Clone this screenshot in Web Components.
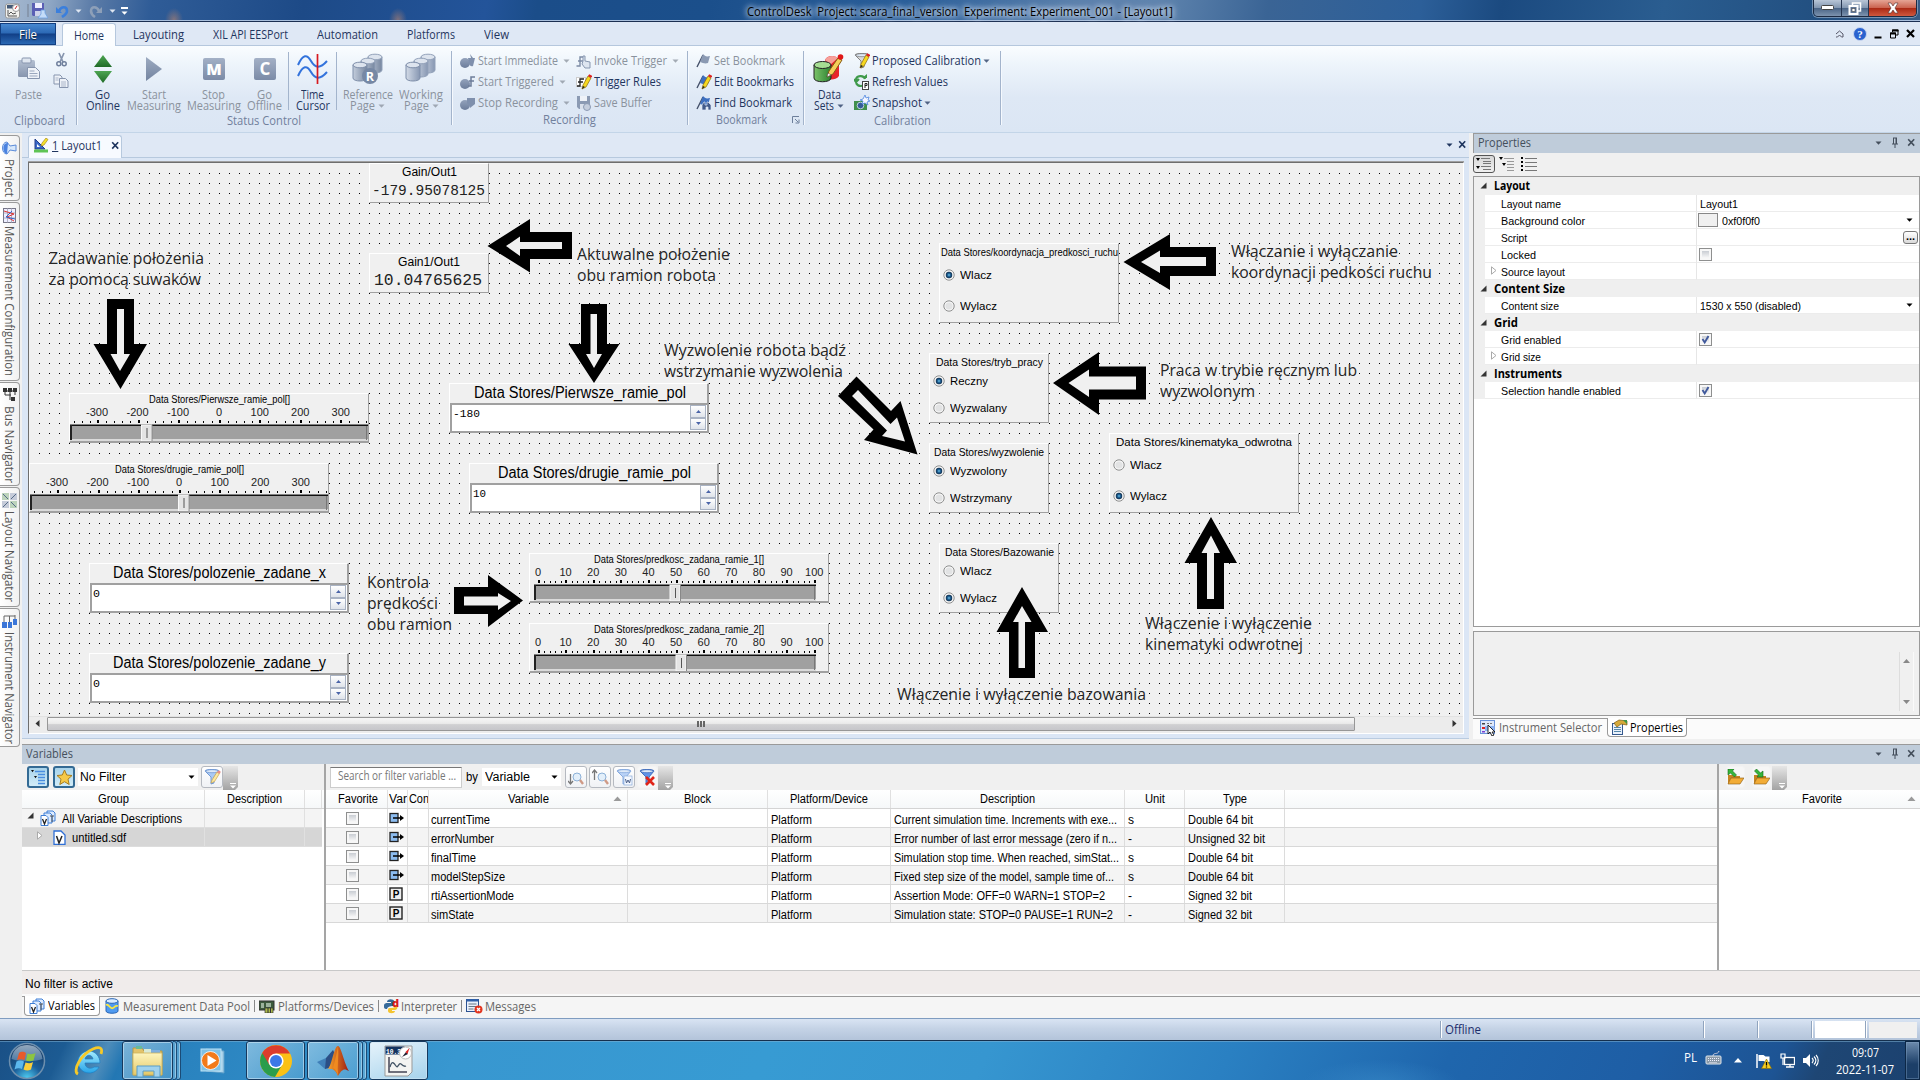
<!DOCTYPE html>
<html lang="pl">
<head>
<meta charset="utf-8">
<title>ControlDesk</title>
<style>
html,body{margin:0;padding:0;width:1920px;height:1080px;overflow:hidden;background:#f0f0f0}
</style>
</head>
<body>
<cd-app></cd-app>
<script>
const UI = "'Open Sans','Noto Sans',sans-serif", AR = "'Liberation Sans',Arial,sans-serif", MONO = "'Liberation Mono','Courier New',monospace";
const RESET = '*{box-sizing:border-box}:host([hidden]){display:none}svg{display:block}';
function def(name, css, html, after) {
  customElements.define(name, class extends HTMLElement {
    connectedCallback() {
      if (this.shadowRoot) return;
      const r = this.attachShadow({mode: 'open'});
      r.innerHTML = `<style>${RESET}${css}</style>` + (typeof html === 'function' ? html(this) : html);
      if (after) after(this, r);
    }
  });
}
const A = (e, n, d = '') => e.getAttribute(n) ?? d;

/* text squeezed or stretched to a given advance width */
def('fit-text', `:host{display:inline-block;white-space:pre;flex:none}
span{display:inline-block;transform-origin:0 50%}
:host([v]) span{writing-mode:vertical-rl;transform-origin:50% 0}`,
'<span><slot></slot></span>', (h, r) => {
  const s = r.querySelector('span'), w = +A(h, 'w', 0);
  if (!w) return;
  const b = s.getBoundingClientRect();
  if (h.hasAttribute('v')) { h.style.height = w + 'px'; s.style.transform = `scaleY(${w / b.height})`; }
  else { h.style.width = w + 'px'; s.style.transform = `scaleX(${w / b.width})`; }
});
const T = (t, w, st = '') => `<fit-text w="${w}" style="${st}">${t}</fit-text>`;

/* ---------- icons ---------- */
const G = (id, a, b, v = 1) => `<linearGradient id="${id}" x1="0" y1="0" x2="${v ? 0 : 1}" y2="${v ? 1 : 0}"><stop stop-color="${a}"/><stop offset="1" stop-color="${b}"/></linearGradient>`;
const cyl = (x, y, f, s) => `<path d="M${x} ${y}v13c0 4 14 4 14 0v-13z" fill="${f}" stroke="${s}"/><ellipse cx="${x + 7}" cy="${y}" rx="7" ry="2.8" fill="#dde4ee" stroke="${s}"/>`;
const rec = `<circle cx="5" cy="10" r="5" fill="url(#g)"/>`;
const flag = (c) => `<path d="M1 14L7 2" stroke="#44506a" stroke-width="1.4"/><path d="M7 1c2 2 3 3 7 2l-2 7c-3 1-5 0-8-1z" fill="${c}"/>`;
const pencil = `<path d="M6 15l1-4 5-9 3 2-5 9z" fill="#f6d820" stroke="#8a6a10" stroke-width=".7"/><path d="M12 2l1.200-1.800 3 1.700-1.200 2.100z" fill="#d22"/><path d="M6 15l1-3 2 1z" fill="#222"/>`;
const funnel = (a, s) => `<path d="M1 2c0-2 14-2 14 0l-5 6v6l-3 1V8z" fill="${a}" stroke="${s}" stroke-width=".9"/><ellipse cx="8" cy="2.200" rx="6.500" ry="1.500" fill="#dfeaf8" stroke="${s}" stroke-width=".7"/>`;
const I = {
 app:[16,16,`<rect x=".5" y="1" width="14" height="14" rx="2" fill="#f1f1ee" stroke="#999"/><rect x="2" y="2" width="7" height="3.500" fill="#445a77"/><path d="M3 7v6h9M4 11l2-2 2 2 3-1" stroke="#555" fill="none"/><circle cx="11" cy="5" r="3.500" fill="#fff" stroke="#999"/><path d="M10 6l2-3" stroke="#c22"/>`],
 save:[17,17,`<path d="M1 1h12v13H2l-1-1z" fill="#5a5fb4"/><rect x="4" y="1" width="7" height="5" fill="#eef"/><rect x="4" y="9" width="6" height="5" fill="#cdd2ea"/><path d="M10 8h4v3l3 5H7l3-4z" fill="#c4dcf8" stroke="#6ca0e0" stroke-width=".8"/>`],
 undo:[14,14,`<path d="M1 3v6h6z" fill="#3b7fdc"/><path d="M4 7C6 2 12 2 12 7c0 3-2 4-5 6" fill="none" stroke="#3b7fdc" stroke-width="2.600"/>`],
 redo:[14,14,`<path d="M13 3v6H7z" fill="#8d9fb8"/><path d="M10 7C8 2 2 2 2 7c0 3 1 4 4 6" fill="none" stroke="#8d9fb8" stroke-width="2.600"/>`],
 paste:[24,24,`<defs>${G('g','#b4c0d2','#8795ae')}</defs><rect x="1" y="3" width="17" height="17" rx="1.500" fill="url(#g)"/><rect x="5" y="1" width="9" height="5" rx="1" fill="#dfe6f0" stroke="#8795ae"/><path d="M10.500 10.500h8l4 4v7h-12z" fill="#eef2f8" stroke="#8795ae"/><path d="M12.500 14h5M12.500 16.500h8M12.500 19h8" stroke="#9aa7bd"/>`],
 cut:[11,15,`<path d="M3 1l4 9M8 1L4 10" stroke="#8795ae" stroke-width="1.700"/><circle cx="2.800" cy="11.800" r="2" fill="none" stroke="#6f7f9c" stroke-width="1.500"/><circle cx="8.200" cy="11.800" r="2" fill="none" stroke="#6f7f9c" stroke-width="1.500"/>`],
 copy:[16,14,`<path d="M1 1h6l2 2v7H1z" fill="#eef2f8" stroke="#8795ae"/><path d="M6.500 4.500h6l2.500 2.500v6.500h-8.500z" fill="#eef2f8" stroke="#8795ae"/><path d="M2.500 4h3M2.500 6h3M8 8h5M8 10h5M8 12h5" stroke="#9aa7bd" stroke-width=".8"/>`],
 online:[20,30,`<defs>${G('g','#4da552','#1f6b27')}</defs><path d="M10 1l9 12H1z" fill="url(#g)"/><path d="M10 29l9-12H1z" fill="url(#g)"/>`],
 play:[18,26,`<defs>${G('g','#9dabc1','#7384a0')}</defs><path d="M1 1l16 12L1 25z" fill="url(#g)"/>`],
 M:[24,24,`<defs>${G('g','#a3b0c6','#7b8ba7')}</defs><rect x="1" y="1" width="22" height="22" rx="2" fill="url(#g)"/><text x="12" y="18" text-anchor="middle" font-family="Open Sans" font-weight="800" font-size="16" fill="#fff">M</text>`],
 C:[24,24,`<defs>${G('g','#a3b0c6','#7b8ba7')}</defs><rect x="1" y="1" width="22" height="22" rx="2" fill="url(#g)"/><text x="12" y="18" text-anchor="middle" font-family="Open Sans" font-weight="700" font-size="17" fill="#fff">C</text>`],
 cursor:[32,32,`<path d="M1 12c5-11 9-11 13-4s9 8 16 0M1 23c5-11 9-11 13-4s9 8 16 0" fill="none" stroke="#3373dc" stroke-width="2"/><path d="M20.500 1v30" stroke="#d7191f" stroke-width="1.700"/>`],
 ref:[32,32,`<defs>${G('g','#c3cddc','#76869f',0)}</defs>${cyl(16,4,'url(#g)','#93a2ba')}${cyl(9,8,'url(#g)','#93a2ba')}${cyl(1,12,'url(#g)','#7f8faa')}<circle cx="18" cy="23" r="8" fill="#7688a5"/><text x="18" y="28" text-anchor="middle" font-family="Open Sans" font-weight="700" font-size="12.500" fill="#fff">R</text>`],
 work:[32,32,`<defs>${G('g','#d3dbe7','#8797b2',0)}</defs>${cyl(16,4,'url(#g)','#93a2ba')}${cyl(9,8,'url(#g)','#93a2ba')}${cyl(1,12,'url(#g)','#7f8faa')}`],
 rec1:[16,16,`<defs>${G('g','#93a2bb','#6c7d9b')}</defs>${rec}<path d="M8 5h3l-1-4 3 4h2l-2 8c-2 1-4-1-4-3z" fill="#7f90ad"/>`],
 rec2:[16,16,`<defs>${G('g','#93a2bb','#6c7d9b')}</defs>${rec}<path d="M8 12h3V3h4M9 7h5" stroke="#6d7d99" stroke-width="1.500" fill="none"/>`],
 rec3:[16,16,`<defs>${G('g','#93a2bb','#6c7d9b')}</defs>${rec}<path d="M7 3h8v6l-5 4c0-4-3-4-3-5z" fill="#7f90ad"/>`],
 inv:[16,16,`<path d="M.5 13H4V4h4M2 8h5" stroke="#7c8ba5" stroke-width="1.400" fill="none"/><path d="M7 8V3h2v5l5 1v6H9l-3-4z" fill="#dde5f0" stroke="#8797b0"/>`],
 trig:[16,16,`<rect x=".5" y="3.500" width="9" height="9" fill="#fff" stroke="#ccc"/><path d="M1 12h3V5h4M2 8h5" stroke="#222" stroke-width="1.300" fill="none"/>${pencil}`],
 buf:[16,16,`<path d="M1 1h13v13H3l-2-2z" fill="#8b9ab3"/><rect x="4" y="1" width="7" height="5" fill="#eef2f8"/><rect x="4" y="9" width="6" height="5" fill="#d9e0eb"/><circle cx="11" cy="12" r="3.500" fill="#c5cedd" stroke="#8b9ab3"/>`],
 bm1:[16,16,flag('#8b9ab3')], bm2:[16,16,flag('#3d6fc0')+pencil],
 bm3:[16,16,flag('#3d6fc0')+`<path d="M6 15v-5l2-3h1v3h2V7h1l3 3v5h-3v-3h-2v3z" fill="#415a8a" stroke="#dfe6f5" stroke-width=".7"/>`],
 data:[32,32,`<defs>${G('g','#7cc36a','#2c8331',0)}</defs><path d="M12 7c2-5 10-5 14-1v17c-3 4-8 4-11 3z" fill="#e8242a"/><path d="M12 7c2-5 10-5 13-2l-8 7z" fill="#f6a09a"/><path d="M1 12v13c0 5 17 5 17 0V12z" fill="url(#g)" stroke="#222"/><ellipse cx="9.500" cy="12" rx="8.500" ry="3.500" fill="#a6dd93" stroke="#222"/><path d="M14 24l2-6 9-13 4 2-9 14z" fill="#f4cf5a" stroke="#8a5a10"/><path d="M14 24l1-4 3 2z" fill="#fff" stroke="#333" stroke-width=".5"/><circle cx="27.500" cy="4" r="2.800" fill="#e01818"/>`],
 prop:[16,16,`${funnel('#d8d8d8','#777')}${pencil}`],
 refr:[16,16,`<path d="M2 6c0-5 8-5 9-1M0 5l2 3 3-3M11 9c-1 4-7 4-9 0" stroke="#3f9a4b" stroke-width="2.200" fill="none"/><path d="M8 4h5V0z" fill="#3f9a4b"/><rect x="8.500" y="7.500" width="6" height="8" fill="#fff" stroke="#444"/><path d="M11 14V9.500h2v2h-2" stroke="#222" fill="none"/>`],
 snap:[16,16,`<rect x="0" y="6" width="13" height="9" fill="#3f8f4c"/><circle cx="6.500" cy="10.500" r="3.300" fill="#335c99" stroke="#bcd"/><path d="M11 0l1 3 3-1-1 3 2 1-3 1 1 3-3-2-3 1 1-3-3-1 3-1z" fill="#f5f7ff" stroke="#4f86df" stroke-width=".8"/>`],
 dlg:[8,8,`<path d="M.5 7V.5H7M3 3l3 3M7 3.500V7H3.500" stroke="#6d7f9b" fill="none"/>`],
 layout:[15,15,`<path d="M1 1v10h10z" fill="#3a69c8" stroke="#223e8a"/><path d="M3 6v3h3z" fill="#fff"/><rect x="0" y="11.500" width="14" height="3" fill="#5fc455"/><path d="M7 8l1-3 4-5 2 1.500-4 5.500z" fill="#f7e22b" stroke="#997a10" stroke-width=".6"/>`],
 caret:[7,4,`<path d="M.5.5h6L3.500 3.800z" fill="currentColor"/>`],
 x:[9,9,`<path d="M1.200 1.200l6 6.400M7.200 1.200l-6 6.400" stroke="currentColor" stroke-width="1.600"/>`],
 pin:[8,11,`<path d="M2.500 1v6M5.500 1v6M2 1h4M1 7h6M4 7v4" stroke="#444f5c" fill="none"/><path d="M5 1v6" stroke="#444f5c"/>`],
 chev:[9,8,`<path d="M1 4l3.500-3L8 4M1 7h1.500l2-2 2 2H8V4" stroke="#556" fill="none"/>`],
 help:[14,14,`<circle cx="7" cy="7" r="6.500" fill="#2a62cf" stroke="#c8d6ee"/><text x="7" y="11" text-anchor="middle" font-family="Liberation Serif" font-weight="700" font-size="11" fill="#fff">?</text>`],
 mini:[8,10,`<path d="M.5 8.500h7" stroke="#000" stroke-width="2"/>`],
 rest:[10,10,`<path d="M3.500 3V1H9v5H7" stroke="#000" fill="none"/><path d="M3 1.500h6.500M1 4.500h6" stroke="#000" stroke-width="2"/><path d="M1.500 4v5h5V4z" stroke="#000" fill="none"/>`],
 proj:[15,14,`<path d="M14 4v6l-6-1-3 4c-6 0-6-12 0-12l3 4z" fill="#d8e8fb" stroke="#5a8ad8"/><path d="M6 2c-6-1-6 10-1 11z" fill="#4b83e0"/>`],
 meas:[13,15,`<rect x=".5" y=".5" width="12" height="14" fill="#eef" stroke="#778"/><path d="M.5 5h12M.5 10h12M4.500 0v15M8.500 0v15" stroke="#99a" stroke-width=".7"/><path d="M1 3l10 3-7 3 7 4" stroke="#d33" fill="none"/><path d="M12 11L3 9l6-6" stroke="#36c" fill="none"/>`],
 bus:[14,14,`<path d="M2 3h10M2 3v4h6M12 3v4M7 3v9" stroke="#333" fill="none"/><rect x="0" y="0" width="4" height="4" fill="#333"/><rect x="5" y="0" width="4" height="4" fill="#333"/><rect x="10" y="0" width="4" height="4" fill="#333"/><rect x="8" y="9" width="4" height="4" fill="#333"/>`],
 lay2:[15,15,`<rect x="0" y="0" width="7" height="7" fill="#bcd3bb"/><rect x="8" y="0" width="7" height="7" fill="#c5cbd9"/><rect x="0" y="8" width="7" height="7" fill="#c5cbd9"/><rect x="8" y="8" width="7" height="7" fill="#bcd3bb"/><path d="M1 1l5 5M14 1L9 6M1 14l5-5M14 14L9 9" stroke="#556b88"/>`],
 inst:[15,13,`<path d="M2 8V1h11M7.500 1v7M13 0v5" stroke="#666" fill="none"/><rect x="0" y="7" width="5" height="6" fill="#3b76d8"/><rect x="6" y="7" width="4" height="6" fill="#3b76d8"/><rect x="11" y="4" width="4" height="6" fill="#3b76d8"/>`],
 cat1:[16,14,`<path d="M0 1h4l-2 3zM0 9h4l-2 3z" fill="#000"/><path d="M5 1.500h9M7 4.500h8M7 6.500h8M5 9.500h10M7 12.500h8" stroke="#777"/>`],
 cat2:[16,14,`<path d="M0 0h4l-2 3zM3 6h4l-2 3z" fill="#000"/><path d="M5 1.500h10M8 4.500h7M8 7.500h7M8 10.500h7M8 13.500h7" stroke="#999"/>`],
 cat3:[16,15,`<path d="M0 0h2v2H0zM0 4h2v2H0zM0 8h2v2H0zM0 12h2v2H0z" fill="#000"/><path d="M4 1.500h12M4 5.500h12M4 9.500h12M4 13.500h12" stroke="#777"/>`],
 tri:[7,7,`<path d="M6.500 .5v6H.5z" fill="#333"/>`],
 trio:[6,9,`<path d="M.5.800L5 4.500.5 8.200z" fill="#fff" stroke="#aaa"/>`],
 treeb:[16,16,`<path d="M1 1h3l-1.500 2.200zM4 7h3L5.500 9.200z" fill="#111"/><path d="M5 2.500h10M8 5.500h7M8 8.500h7M8 11.500h7M8 14.500h7" stroke="#4a8ee0" stroke-width="1.400"/>`],
 star:[17,17,`<path d="M8.500 1l2.200 5 5.300.5-4 3.700 1.200 5.300-4.700-2.800-4.700 2.800L5 10.200 1 6.500 6.300 6z" fill="#f5c948" stroke="#a87c1d"/>`],
 fpen:[17,17,funnel('#a9c9f5','#6a92cf')+`<path d="M7 14l1-3 5-8 2.500 1.500-5 8z" fill="#fbe8a0" stroke="#c9a24e" stroke-width=".7"/><circle cx="15" cy="3" r="1.600" fill="#e98d88"/>`],
 fw:[17,17,funnel('#b9d2f7','#7ea3da')+`<rect x="8" y="7" width="8" height="9" fill="#f4f8ff" stroke="#8bacd9" stroke-width=".7"/><path d="M9.500 10l1 4 1.500-3 1.500 3 1-4" stroke="#4c618a" fill="none"/>`],
 fx:[17,17,funnel('#5f93e8','#3a67b8')+`<path d="M7 8l8 8M15 8l-8 8" stroke="#e02418" stroke-width="2.600"/>`],
 sd:[17,17,`<path d="M2.500 5v10M0 12l2.500 3L5 12" stroke="#777" fill="none" stroke-width="1.300"/><circle cx="9" cy="8" r="4" fill="#e3effa" stroke="#8cb1d8"/><path d="M12 11l3 4" stroke="#cf9a86" stroke-width="2.400"/>`],
 su:[17,17,`<path d="M2.500 1v10M0 4l2.500-3L5 4" stroke="#777" fill="none" stroke-width="1.300"/><circle cx="10" cy="8" r="4" fill="#e3effa" stroke="#8cb1d8"/><path d="M13 11l3 4" stroke="#cf9a86" stroke-width="2.400"/>`],
 over:[15,24,`<defs>${G('g','#e6e6e6','#a3a3a3')}</defs><path d="M0 0h15v21l-3 3H0z" fill="url(#g)"/><path d="M7 17.500h6" stroke="#fff"/><path d="M7 19.500h6l-3 3z" fill="#fff"/>`],
 vars:[16,16,`<path d="M7 1h6l2 2v8H7z" fill="#dcebff" stroke="#3f7fd6"/><path d="M4 3h6l2 2v8H4z" fill="#dcebff" stroke="#3f7fd6"/><path d="M1 5.500h5l2 2v8H1z" fill="#fff" stroke="#3f7fd6"/><path d="M2.500 9l2 5 2-5" stroke="#222" stroke-width="1.300" fill="none"/><path d="M10 6h4M12 6v6" stroke="#555"/>`],
 vfile:[13,15,`<path d="M1 1h7l4 4v9.500H1z" fill="#fff" stroke="#2f6fd6" stroke-width="1.300"/><path d="M3.500 6l2.500 7L9 6" stroke="#222" stroke-width="1.500" fill="none"/>`],
 out:[16,12,`<rect x="1" y="1.500" width="8" height="9" fill="#8cbcf0" stroke="#222" stroke-width="1.300"/><path d="M4 6h8" stroke="#000" stroke-width="1.500"/><path d="M11 3l4 3-4 3z" fill="#000"/>`],
 P:[14,14,`<rect x="1" y="1" width="12" height="12" fill="#eee" stroke="#222" stroke-width="1.400"/><text x="7" y="11" text-anchor="middle" font-family="Liberation Sans" font-weight="700" font-size="10" fill="#000">P</text>`],
 up:[9,6,`<path d="M4.500.5l4 4.500h-8z" fill="#9a9a9a"/>`],
 pool:[14,16,`<path d="M1 3v10c0 3 12 3 12 0V3z" fill="#4f9af0" stroke="#2a66b5"/><ellipse cx="7" cy="3" rx="6" ry="2.300" fill="#d7eaff" stroke="#2a66b5"/><path d="M1 7c3-2 4 5 7 3 2-1 2-3 5-2" stroke="#f8e642" stroke-width="1.800" fill="none"/>`],
 plat:[16,14,`<rect x="0" y="2" width="15" height="9" fill="#3c5a3c" stroke="#333"/><path d="M2 4h3v5H2zM7 4h5v4H7z" fill="#9cb29c"/><path d="M6 14V9h8v5z" fill="#aab94a" stroke="#333" stroke-width=".7"/><path d="M9 9v5M11.500 9v5" stroke="#333"/>`],
 py:[16,16,`<path d="M1 8c0-3 2-3 4-3h3V4H4c0-4 7-3 7-1v4c0 2-6 0-7 4-3 0-3-1-3-3z" fill="#35699a"/><path d="M12 7c3 0 3 2 2 4-1 1-2 1-5 1v1h3c0 3-7 3-7 0 0-4 1-3 4-3 2 0 3-1 3-3z" fill="#f4c430"/><text x="12.500" y="8.500" text-anchor="middle" font-family="Open Sans" font-weight="800" font-size="11" fill="#d81c1c">d</text>`],
 msg:[17,16,`<rect x=".5" y="1.500" width="12" height="12" fill="#eaf1fb" stroke="#2c5292"/><rect x=".5" y="1" width="12" height="2.500" fill="#2f5fa8"/><path d="M2.500 6h8M2.500 8.500h8M2.500 11h5" stroke="#678"/><circle cx="12.500" cy="11.500" r="4" fill="#e2351f"/><path d="M11 10l3 3M14 10l-3 3" stroke="#fff" stroke-width="1.300"/>`],
 isel:[16,16,`<rect x=".5" y=".5" width="14" height="13" fill="#dfe9fb" stroke="#6a93da"/><rect x="5" y="6" width="9.500" height="5" fill="#8fb4f2"/><path d="M2 3h3v1.500H2z" fill="#444"/><path d="M2 7h3v2H2z" fill="#d22"/><path d="M2 11h3v1.500H2z" fill="#7a3fd0"/><path d="M7 3.500h6" stroke="#777" stroke-dasharray="2 1"/><path d="M8 5v9l2-2 2 4 2-1-2-3h3z" fill="#fff" stroke="#111" stroke-width=".9"/>`],
 propi:[17,16,`<rect x="1.500" y="4.500" width="10" height="11" fill="#eaf1fb" stroke="#35598e"/><path d="M3 8.500h7M3 10.500h7M3 12.500h7" stroke="#58a"/><path d="M3 4l5-3 8 1v4l-6-1-4 3z" fill="#d5a93a" stroke="#7c5b12" stroke-width=".7"/><path d="M12 1h4v4z" fill="#3d9447"/>`],
 fold1:[17,16,`<path d="M1 6h5l1 1h6v3H4L1 15z" fill="#c78420"/><path d="M4 9h13l-4 6H1z" fill="#f2ac36" stroke="#8b5a10" stroke-width=".6"/><path d="M1 0h6L5.500 2l4 4-2 2-4-4L1 6z" fill="#35b63a" stroke="#14661a" stroke-width=".6"/>`],
 fold2:[17,16,`<path d="M1 6h5l1 1h6v3H4L1 15z" fill="#c78420"/><path d="M4 9h13l-4 6H1z" fill="#f2ac36" stroke="#8b5a10" stroke-width=".6"/><path d="M10 8H4l1.500-2-4-4 2-2 4 4L10 2z" fill="#35b63a" stroke="#14661a" stroke-width=".6"/>`],
 orb:[38,38,`<defs><radialGradient id="r" cx=".5" cy="1" r=".9"><stop stop-color="#4fd0f4"/><stop offset=".45" stop-color="#1b5f9b"/><stop offset="1" stop-color="#173a63"/></radialGradient>${G('h','#e8f3fb','#6f96bb')}</defs><circle cx="19" cy="19" r="17.500" fill="url(#r)" stroke="#6d8fae" stroke-width="1.500"/><path d="M3.500 17C5 6 12 3 19 3s14 3 15.500 14C26 20 12 20 3.500 17z" fill="url(#h)" opacity=".6"/><path d="M11 11c3-2 5-1 7 0l-1.500 7c-3-1-5-1-7.500 0z" fill="#e65a2b"/><path d="M19.500 11.500c3 1 5 1 8-.5l-2 7.500c-3 1-5 1-7.500 0z" fill="#8cc541"/><path d="M8.500 19.500c3-1.500 5-1 7.500 0l-2 7.500c-2-1-5-1-7.500.5z" fill="#5cb8ee"/><path d="M17.500 20.500c3 1 5 1 7.500-.5l-2 7.500c-3 1.500-5 1-7.500 0z" fill="#fbce3b"/>`],
 ie:[32,32,`<defs>${G('g','#a5ecff','#27a4e8')}</defs><path fill-rule="evenodd" d="M26 22c-2 4-6 6-10 6-6 0-11-5-11-11S10 6 16 6s11 5 11 12H12c0 6 7 6 9 4zM12 14h8c-1-5-7-5-8 0z" fill="url(#g)" stroke="#1c7fc4" stroke-width=".7"/><path d="M5 29C-1 26 8 9 20 4c7-3 10-1 8 5" fill="none" stroke="#f6c928" stroke-width="2.800"/>`],
 expl:[34,34,`<defs>${G('g','#fdf5be','#e5c867')}</defs><path d="M2 4h9l2 3h18v24H2z" fill="#e2c36b" stroke="#b59a48"/><path d="M5 2h6v3H5z" fill="#6b9"/><path d="M13 5h7v4h-7z" fill="#d9ead6"/><path d="M20 6h9v4h-9z" fill="#7fb0df"/><path d="M2 9h29v22H2z" fill="url(#g)" stroke="#cdb25c" stroke-width=".8"/><path d="M6 33V22h23v11h-6v-6H12v6z" fill="#9fd2ee" stroke="#5b9dc6"/>`],
 wmp:[30,30,`<path d="M8 3l18 2v22l-18-2z" fill="#a5cfe8" stroke="#5d9fc9"/><rect x="3" y="3" width="20" height="22" fill="#7ec1e6" stroke="#bfe3f5"/><circle cx="12.500" cy="14.500" r="9" fill="#f27a1a" stroke="#fff" stroke-width=".8"/><path d="M9.500 9v11l9-5.500z" fill="#fff"/>`],
 chrome:[32,32,`<circle cx="16" cy="16" r="16" fill="#fbc116"/><path d="M2.200 8A16 16 0 0 0 15 32L22 20 16 16z" fill="#2a9d4c"/><path d="M2.200 8l7.300 12L16 8.500h14A16 16 0 0 0 2.200 8z" fill="#dc3c2c"/><circle cx="16" cy="16" r="7.600" fill="#fff"/><circle cx="16" cy="16" r="6" fill="#3b78e7"/>`],
 matlab:[34,32,`<defs>${G('g','#f7a128','#9c1c12',0)}</defs><path d="M1 17l9-4 5 5-6 6z" fill="#3f7fb8"/><path d="M10 13l7-8 3 6-7 12-4 1z" fill="#2b4f86"/><path d="M12 24c4-4 6-23 10-23 3 0 6 17 11 25-5-3-7-2-11 5-2-5-5-8-10-7z" fill="url(#g)"/><path d="M22 1c-1 6-3 15-5 22 2 1 4 4 5 8-1-10 1-20 0-30z" fill="#f08a20"/>`],
 cdesk:[32,32,`<path d="M2 1h27v26l-4 4H2z" fill="#f4f4f2" stroke="#999"/><rect x="2.500" y="1.500" width="19" height="8" fill="#14335f"/><text x="3" y="8.500" font-family="Liberation Mono" font-weight="700" font-size="8" textLength="15" lengthAdjust="spacingAndGlyphs" fill="#fff">10.3</text><path d="M6 12v15h18" stroke="#445" stroke-width="1.500" fill="none"/><path d="M7 22c2-7 4-4 6-1s3-4 5-2 3 3 5 2" stroke="#456" fill="none" stroke-width="1.300"/><circle cx="22.500" cy="8" r="6" fill="#fff" stroke="#bbb"/><path d="M19 12l4-5 2 2z" fill="#223"/><path d="M22.500 7l4-4-2 6z" fill="#d22"/>`],
 kbd:[17,15,`<path d="M8 6c0-4 5-1 6-5" stroke="#ccd" fill="none"/><rect x="1" y="6" width="15" height="8" rx="1" fill="#8b9aa8" stroke="#dfe6ec"/><path d="M3 8.500h11M3 10.500h11M4.500 12.500h8" stroke="#eef" stroke-dasharray="1 1"/>`],
 tup:[8,5,`<path d="M4 0l4 4.500H0z" fill="#fff"/>`],
 flagw:[16,16,`<path d="M1 1v14" stroke="#fff" stroke-width="1.500"/><path d="M2.500 2h5l2 1.500h4V9h-4l-2-1h-5z" fill="#fff"/><path d="M10.500 6l5 9.500h-10z" fill="#f9cf1f" stroke="#8a6c00" stroke-width=".6"/><path d="M10.500 9v3.500M10.500 13.500v1" stroke="#000" stroke-width="1.300"/>`],
 net:[15,15,`<rect x="4.500" y="4.500" width="10" height="7" fill="#1d4470" stroke="#fff" stroke-width="1.300"/><path d="M6 14h8M10 12v2" stroke="#fff" stroke-width="1.300"/><path d="M1 1h4v4H1zM3 5v7" stroke="#fff" fill="none" stroke-width="1.200"/>`],
 spk:[16,15,`<path d="M0 5h3l4-4v13l-4-4H0z" fill="#fff"/><path d="M9 5c1.500 1.500 1.500 3.500 0 5M11 3.500c2.500 2.500 2.500 5.500 0 8M13 2c3 3 3 8 0 11" stroke="#fff" fill="none" stroke-width="1.100"/>`]
};
def('cd-icon', ':host{display:inline-block;flex:none;line-height:0}', h => {
  const [w, ht, s] = I[A(h, 'n')]; return `<svg width="${w}" height="${ht}" viewBox="0 0 ${w} ${ht}">${s}</svg>`;
});
const IC = (n, st = '') => `<cd-icon n="${n}" style="${st}"></cd-icon>`;

/* ---------- title bar ---------- */
def('title-bar', `:host{display:flex;height:22px;border-bottom:1px solid #1c2f52;box-shadow:inset 0 -1px 0 #a9bfdc;
background:radial-gradient(ellipse 9px 12px at 174px 20px,#b9856f99,transparent),radial-gradient(ellipse 9px 12px at 398px 20px,#b9856f99,transparent),linear-gradient(100deg,#a9bbd1 0,#8ea6c4 50px,#5879a6 95px,#2f5c97 150px,#1d4a87 300px,#23549a 480px,#1b4d89 530px,#1b4f8b 700px,#2b5f9a 900px,#5b80ac 1060px,#5f84ae 1140px,#3a6495 1250px,#2c5f99 1400px,#1b4a80 1480px,#2a5d90 1640px,#224f80 1800px,#3d6088 1920px);font:12px ${UI};color:#000;align-items:center}
.q{display:flex;align-items:center;padding-left:5px;height:19px;width:747px;color:#dfe7f2}
.sep{width:2px;height:13px;background:#8797ad;margin:0 2px 0 6px}
.t{text-shadow:0 0 5px #dde8f5,0 0 7px #cfdcee,0 0 9px #c5d5ea;margin-top:2px}
.w{margin-left:auto;margin-right:3px;display:flex;height:17px;align-self:flex-start;border:1px solid #1d2b43;border-top:0;border-radius:0 0 5px 5px;overflow:hidden;box-shadow:0 0 0 1px #b9c8dc88}
.w div{display:flex;align-items:center;justify-content:center;background:linear-gradient(#b9c6d7 0,#8397b1 48%,#4a6486 52%,#7d93ae);border-right:1px solid #24344f}
.w .c{background:linear-gradient(#e5a595 0,#cb6450 48%,#ab2a15 52%,#d0583e);border:0}`,
`<div class="q">${IC('app')}<i class="sep"></i>${IC('save')}${IC('undo','margin-left:7px')}${IC('caret','margin-left:6px')}${IC('redo','margin-left:7px')}${IC('caret','margin-left:6px')}${IC('caret','margin-left:5px;border-top:2px solid #fff;padding-top:2px;color:#fff')}</div>
<div class="t">${T('ControlDesk  Project: scara_final_version  Experiment: Experiment_001 - [Layout1]',426)}</div>
<div class="w"><div style="width:28px"><svg width="13" height="6"><rect x=".5" y=".5" width="12" height="4" rx="1" fill="#fff" stroke="#444"/></svg></div>
<div style="width:27px"><svg width="14" height="13"><rect x="4.500" y="1" width="8" height="8" fill="none" stroke="#fff" stroke-width="1.500"/><rect x="1.500" y="4" width="8" height="8" fill="#60789a" stroke="#fff" stroke-width="2"/><rect x="4" y="6.500" width="3" height="3" fill="#fff" stroke="#444" stroke-width=".6"/></svg></div>
<div class="c" style="width:47px"><svg width="14" height="12"><path d="M2 1h3l2 3 2-3h3L9 6l3 5H9L7 8l-2 3H2l3-5z" fill="#fff" stroke="#533" stroke-width=".6"/></svg></div></div>`);

/* ---------- ribbon ---------- */
def('ribbon-tabs', `:host{display:flex;height:24px;background:#dfe8f5;border-bottom:1px solid #b5c7dd;font:12px ${UI};color:#1f355e;padding-top:1px}
.f{width:56px;height:22px;background:linear-gradient(#4788d0 0,#2c69b5 45%,#113f86 50%,#2a68b3);color:#fff;border:1px solid #123f82;display:flex;align-items:center;justify-content:center;text-shadow:0 1px 1px #123}
.h{width:54px;margin-left:6px;height:23px;background:#fbfdff;border:1px solid #b5c7dd;border-bottom:0;border-radius:3px 3px 0 0;display:flex;align-items:center;justify-content:center}
.t{display:flex;align-items:center;height:23px}
.r{margin-left:auto;display:flex;align-items:center;height:21px;padding-right:5px}`,
`<div class="f">${T('File',18)}</div><div class="h">${T('Home',30)}</div>
<div class="t">${T('Layouting',51,'margin-left:17px')}${T('XIL API EESPort',75,'margin-left:29px')}${T('Automation',61,'margin-left:29px')}${T('Platforms',48,'margin-left:29px')}${T('View',25,'margin-left:29px')}</div>
<div class="r">${IC('chev')}${IC('help','margin:0 7px 0 9px')}${IC('mini')}${IC('rest','margin:0 7px')}<svg width="9" height="9"><path d="M1 1l7 7M8 1L1 8" stroke="#000" stroke-width="2.200"/></svg></div>`);
def('rb-big', `:host{display:flex;flex-direction:column;align-items:center;color:#1f355e;height:68px;flex:none}
:host([off]){color:#8a929d}.i{height:36px;display:flex;align-items:center;justify-content:center}
.l{line-height:11px;height:11px;display:flex;align-items:center}.l cd-icon{margin-left:3px;opacity:.75}`,
h => `<div class="i">${IC(A(h,'n'))}</div><div class="l" style="margin-top:2px">${T(A(h,'a'),A(h,'aw'))}</div>${h.hasAttribute('b')?`<div class="l">${T(A(h,'b'),A(h,'bw'))}${h.hasAttribute('d')?IC('caret'):''}</div>`:''}`);
def('rb-row', `:host{display:flex;align-items:center;height:21px;color:#1f355e}:host([off]){color:#8a929d}.c{margin-left:2px;opacity:.75}:host([off]) .c{margin-left:5px}fit-text{margin-left:2px}`,
h => IC(A(h,'n'))+T(A(h,'t'),A(h,'w'))+(h.hasAttribute('d')?IC('caret').replace('cd-icon','cd-icon class="c"'):''));
def('ribbon-group', `:host{display:flex;flex-direction:column;height:74px;margin-top:5px;border-right:1px solid #a3b4cc;box-shadow:1px 0 0 #f5f9fe;flex:none}
.b{display:flex;height:63px;align-items:flex-start}.c{display:flex;justify-content:center;height:13px;align-items:center;color:#71809c}`,
h => `<div class="b"><slot></slot></div><div class="c" style="padding-left:${A(h,'cl',0)}px">${T(A(h,'c'),A(h,'cw'))}<slot name="x"></slot></div>`);
def('ribbon-bar', `:host{display:flex;height:87px;background:linear-gradient(#fafdff 0,#edf4fb 22%,#dee8f5 60%,#dbe6f4 100%);border-bottom:1px solid #c3d5e8;font:12px ${UI}}
rb-big{width:var(--w)}.s{width:1px;height:58px;background:#a3b4cc;margin-top:1px}.col{display:flex;flex-direction:column;margin-top:-1px}`,
`<ribbon-group c="Clipboard" cw="51" cl="3" style="width:77px"><rb-big off n="paste" a="Paste" aw="27" style="--w:57px"></rb-big><div style="display:flex;flex-direction:column;gap:7px;padding-top:1px;margin-left:-4px;align-items:center">${IC('cut')}${IC('copy')}</div></ribbon-group>
<ribbon-group c="Status Control" cw="74" cl="-2" style="width:375px"><rb-big n="online" a="Go" aw="15" b="Online" bw="34" style="--w:51px"></rb-big><rb-big off n="play" a="Start" aw="24" b="Measuring" bw="54" style="--w:52px"></rb-big><rb-big off n="M" a="Stop" aw="23" b="Measuring" bw="54" style="--w:67px"></rb-big><rb-big off n="C" a="Go" aw="15" b="Offline" bw="35" style="--w:35px"></rb-big><i class="s" style="margin-left:6px"></i><rb-big n="cursor" a="Time" aw="23" b="Cursor" bw="34" style="--w:47px"></rb-big><i class="s"></i><rb-big off n="ref" a="Reference" aw="50" b="Page" bw="25" d style="--w:61px"></rb-big><rb-big off n="work" a="Working" aw="44" b="Page" bw="25" d style="--w:46px"></rb-big></ribbon-group>
<ribbon-group c="Recording" cw="53" style="width:236px"><div class="col" style="margin-left:8px;width:117px"><rb-row off n="rec1" t="Start Immediate" w="80" d></rb-row><rb-row off n="rec2" t="Start Triggered" w="76" d></rb-row><rb-row off n="rec3" t="Stop Recording" w="80" d></rb-row></div><div class="col" style="margin-left:-1px"><rb-row off n="inv" t="Invoke Trigger" w="73" d></rb-row><rb-row n="trig" t="Trigger Rules" w="67"></rb-row><rb-row off n="buf" t="Save Buffer" w="58"></rb-row></div></ribbon-group>
<ribbon-group c="Bookmark" cw="51" cl="8" style="width:116px"><div class="col" style="margin-left:8px"><rb-row off n="bm1" t="Set Bookmark" w="71"></rb-row><rb-row n="bm2" t="Edit Bookmarks" w="80"></rb-row><rb-row n="bm3" t="Find Bookmark" w="78"></rb-row></div><cd-icon n="dlg" slot="x" style="margin-left:25px;margin-right:-16px"></cd-icon></ribbon-group>
<ribbon-group c="Calibration" cw="57" style="width:197px"><rb-big n="data" a="Data" aw="23" b="Sets" bw="20" d style="--w:50px"></rb-big><div class="col"><rb-row n="prop" t="Proposed Calibration" w="109" d></rb-row><rb-row n="refr" t="Refresh Values" w="76"></rb-row><rb-row n="snap" t="Snapshot" w="50" d></rb-row></div></ribbon-group>`);

/* ---------- side dock ---------- */
def('side-tab', `:host{display:flex;flex-direction:column;align-items:center;width:20px;border:1px solid #9a9a9a;border-left:0;border-radius:0 4px 4px 0;background:linear-gradient(90deg,#fff,#f1f1f1);margin-bottom:1px;font:13px ${UI};color:#555;padding-top:2px}
.i{height:20px;display:flex;align-items:center}fit-text{margin-left:1px;width:18px;margin-top:1px}`,
h => `<div class="i">${IC(A(h,'n'))}</div><fit-text v w="${A(h,'w')}"><slot></slot></fit-text>`);
def('side-dock', ':host{display:block;width:22px;background:#f0f0f0;padding-top:2px}',
`<side-tab n="proj" w="38" style="height:66px">Project</side-tab><side-tab n="meas" w="150" style="height:179px">Measurement Configuration</side-tab><side-tab n="bus" w="77" style="height:104px">Bus Navigator</side-tab><side-tab n="lay2" w="91" style="height:120px">Layout Navigator</side-tab><side-tab n="inst" w="112" style="height:139px">Instrument Navigator</side-tab>`);

/* ---------- instruments on the layout ---------- */
const BOX = ':host{position:absolute;background:#f0f0f0;border:1px solid #fff;border-right-color:#a0a0a0;border-bottom:2px solid #a0a0a0;display:flex;flex-direction:column;color:#000;';
def('in-display', BOX + `font:12px ${AR};align-items:center;border-bottom-width:1px}.a{height:16px;display:flex;align-items:center}.b{height:22px;display:flex;align-items:center;font-family:${MONO};color:#222}`,
h => `<div class="a">${T(A(h,'t'),A(h,'tw'))}</div><div class="b" style="font-size:${A(h,'fs')}px;margin-top:${A(h,'vy',0)}px">${T(A(h,'v'),A(h,'vw'),'margin-left:-2px')}</div>`);
def('in-numeric', BOX + `font:16px ${AR};border-right-width:2px}.a{height:19px;display:flex;align-items:center;justify-content:center;padding:0 0 1px 2px}
.b{flex:1;background:#fff;border:1px solid #a0a0a0;border-width:2px 0 0 2px;display:flex;justify-content:space-between;padding:0 0 0 1px;font:11.5px ${MONO}}.b fit-text{margin-top:2px}
.s{width:17px;height:25px;display:flex;flex-direction:column;padding-right:1px}.s i{flex:1;border:1px solid #a9b3c4;background:linear-gradient(#fff,#dfe3ea);display:flex;align-items:center;justify-content:center}`,
h => `<div class="a">${T(A(h,'t'),A(h,'tw'))}</div><div class="b">${T(A(h,'v'),A(h,'vw'))}<div class="s"><i><svg width="5" height="3"><path d="M0 3h5L2.500 0z" fill="#4a64a8"/></svg></i><i><svg width="5" height="3"><path d="M0 0h5L2.500 3z" fill="#4a64a8"/></svg></i></div></div>`);
def('in-slider', BOX + `font:10px ${AR}}.t{height:13px;display:flex;align-items:center;justify-content:center;padding-bottom:1px}svg{flex:none}`,
h => {
  const x0 = +A(h,'x0'), st = +A(h,'st'), lab = A(h,'labels').split(','), mi = +A(h,'minor',5), tl = +A(h,'tl'), tr = +A(h,'tr'), th = +A(h,'th');
  let s = '';
  lab.forEach((l, i) => { s += `<text x="${x0 + i * st - (l < 0 ? 1 : .5)}" y="10" text-anchor="middle" font-size="11" font-family="Liberation Sans" fill="#222">${l}</text><rect x="${Math.round(x0 + i * st) - 1}" y="14" width="2" height="3"/>`; });
  for (let k = -mi * 2; k < lab.length * mi + mi; k++) { const x = x0 + k * st / mi; if (x > tl + 1 && x < tr - 1 && (!A(h,'hard') || (k >= 0 && k <= (lab.length - 1) * mi))) s += `<rect x="${Math.round(x)}" y="15" width="1" height="2"/>`; }
  return `<div class="t">${T(A(h,'t'),A(h,'tw'))}</div><svg width="298" height="35"><g>${s}</g>
<rect x="${tl}" y="19" width="${tr - tl}" height="16" fill="#a0a0a0"/><rect x="${tl}" y="33" width="${tr - tl}" height="2" fill="#dadada"/><rect x="${tl}" y="18.500" width="${tr - tl}" height="1.500" fill="#111"/><rect x="${tl}" y="19" width="2" height="15" fill="#222"/><rect x="${tr - 2}" y="20" width="1" height="14" fill="#777"/>
<rect x="${th - 5}" y="19" width="10" height="16" fill="#e4e4e4" stroke="#f8f8f8"/><path d="M${th + 5.500} 19v16" stroke="#888"/><path d="M${th + .5} 22v10" stroke="#555"/></svg>`;
});
def('in-radio', BOX + `font:11.500px ${AR};border-bottom-width:1px}.t{height:15px;display:flex;align-items:center;justify-content:center;flex:none}
.r{display:flex;align-items:center;gap:6px;padding-left:3px;height:14px;flex:none}.r svg{margin-left:-.5px}.r fit-text{margin-left:-.5px}`,
h => {
  const rad = on => `<svg width="12" height="12"><defs><radialGradient id="k"><stop stop-color="#6fc4ea"/><stop offset=".5" stop-color="#1f5f92"/><stop offset="1" stop-color="#0d2c4b"/></radialGradient></defs><circle cx="6" cy="6" r="5.200" fill="#f6f6f6" stroke="#8e8f8f"/><circle cx="6" cy="6" r="3.600" fill="#e2e3e4"/>${on ? '<circle cx="6" cy="6" r="3.200" fill="url(#k)"/>' : ''}</svg>`;
  const g = +A(h,'y1'), d = +A(h,'dy');
  return `<div class="t" style="font-size:${A(h,'fs',10.5)}px">${T(A(h,'t'),A(h,'tw'))}</div><div class="r" style="margin-top:${g - 23}px">${rad(A(h,'on') == 1)}${T(A(h,'a'),A(h,'aw'))}</div><div class="r" style="margin-top:${d - 14}px">${rad(A(h,'on') == 2)}${T(A(h,'b'),A(h,'bw'))}</div>`;
});
def('cd-note', `:host{position:absolute;display:flex;flex-direction:column;font:16.500px/21px ${UI};color:#262626;align-items:flex-start}fit-text{height:21px}`, '<slot></slot>');
def('arrow-layer', ':host{position:absolute;left:0;top:0;pointer-events:none}', () => {
  const ar = (o, i) => `<path d="M${o}z" fill="#000"/><path d="M${i}z" fill="#f0f0f0"/>`;
  return `<svg width="1434" height="553" viewBox="29 163 1434 553">`
  + ar('107 299H134V344H147L120.500 389 93.500 344H107','117 309H124V354H130L120 371 110.500 354H117')
  + ar('572 232V259H530V272.500L487.500 246 530 219V232','562 242V249H520V256L506 246 520 236.500V242')
  + ar('581 304H607V344H619.500L594 383 568.500 344H581','590.500 314H597V354H602L594 368 586 354H590.500')
  + ar('454 587H488V575L523 600.500 488 627V614H454','464 596.500H498V593L511 601 498 610V605.500H464')
  + ar('838 396L856.500 376.500 891 411 900.500 401 917.500 454.500 864 440 873.500 429.500','852 396L858 390 890.500 424 897 417.500 905 441.500 882 436 887 430.500')
  + ar('1216 247V276H1170V290L1123.500 262 1170 234V247','1206 257V266H1160V273L1141 262 1160 250.500V257')
  + ar('1146 366.500V399.500H1099V415L1053 383 1099 352V366.500','1136 376.500V389.500H1089V397L1068.500 383 1089 369.500V376.500')
  + ar('1197 609V563H1184.500L1211 517 1237 563H1224V609','1207 599V553H1201.500L1211 535.500 1220 553H1214V599')
  + ar('1009 678V632H996.500L1022 587 1048 632H1035V678','1018.500 668V622H1013L1022 606 1031.500 622H1025V668') + '</svg>';
});
const at = (x, y, w, h) => `left:${x - 29}px;top:${y - 163}px;` + (w ? `width:${w}px;height:${h}px;` : '');
const note = (x, yc, ...l) => `<cd-note style="${at(x, yc - 11)}">${l.map(([t, w]) => T(t, w)).join('')}</cd-note>`;
const deg = '-300,-200,-100,0,100,200,300', pct = '0,10,20,30,40,50,60,70,80,90,100';
def('layout-canvas', `:host{display:block;position:relative;width:1434px;height:553px;background:#f0f0f0;overflow:hidden}.g{position:absolute;inset:0}`,
`<svg class="g" width="1434" height="553"><defs><pattern id="p" width="10" height="10" patternUnits="userSpaceOnUse"><rect width="1" height="1" fill="#000"/></pattern></defs><rect x="10" y="10" width="1424" height="543" fill="url(#p)"/></svg>
<in-display style="${at(369,163,120,40)}" t="Gain/Out1" tw="55" v="-179.95078125" vw="113" fs="14" vy="1"></in-display>
<in-display style="${at(369,253,120,40)}" t="Gain1/Out1" tw="62" v="10.04765625" vw="108" fs="16"></in-display>
<in-slider style="${at(69,393,300,50)}" t="Data Stores/Pierwsze_ramie_pol[]" tw="141" labels="${deg}" x0="28" st="40.550" tl="0" tr="298" th="76.500"></in-slider>
<in-slider style="${at(29,463,300,50)}" t="Data Stores/drugie_ramie_pol[]" tw="129" labels="${deg}" x0="28" st="40.550" tl="0" tr="298" th="153.500"></in-slider>
<in-slider style="${at(529,553,300,50)}" t="Data Stores/predkosc_zadana_ramie_1[]" tw="170" labels="${pct}" hard="1" x0="8.500" st="27.620" tl="4" tr="286" th="145"></in-slider>
<in-slider style="${at(529,623,300,50)}" t="Data Stores/predkosc_zadana_ramie_2[]" tw="170" labels="${pct}" hard="1" x0="8.500" st="27.620" tl="4" tr="286" th="151"></in-slider>
<in-numeric style="${at(449,383,260,50)}" t="Data Stores/Pierwsze_ramie_pol" tw="212" v="-180" vw="27"></in-numeric>
<in-numeric style="${at(469,463,250,50)}" t="Data Stores/drugie_ramie_pol" tw="193" v="10" vw="13"></in-numeric>
<in-numeric style="${at(89,563,260,50)}" t="Data Stores/polozenie_zadane_x" tw="213" v="0" vw="7"></in-numeric>
<in-numeric style="${at(89,653,260,50)}" t="Data Stores/polozenie_zadane_y" tw="213" v="0" vw="7"></in-numeric>
<in-radio style="${at(939,243,180,80)}" t="Data Stores/koordynacja_predkosci_ruchu" tw="177" y1="32" dy="31" on="1" a="Wlacz" aw="32" b="Wylacz" bw="37"></in-radio>
<in-radio style="${at(929,353,120,70)}" t="Data Stores/tryb_pracy" tw="107" y1="28" dy="27" on="1" a="Reczny" aw="38" b="Wyzwalany" bw="57"></in-radio>
<in-radio style="${at(929,443,120,70)}" t="Data Stores/wyzwolenie" tw="110" y1="28" dy="27" on="1" a="Wyzwolony" aw="57" b="Wstrzymany" bw="62"></in-radio>
<in-radio style="${at(1109,433,190,80)}" t="Data Stores/kinematyka_odwrotna" tw="176" fs="11.500" y1="32" dy="31" on="2" a="Wlacz" aw="32" b="Wylacz" bw="37"></in-radio>
<in-radio style="${at(939,543,120,70)}" t="Data Stores/Bazowanie" tw="109" y1="28" dy="27" on="2" a="Wlacz" aw="32" b="Wylacz" bw="37"></in-radio>
${note(49,258,['Zadawanie położenia',155],['za pomocą suwaków',152])}
${note(577,254,['Aktuwalne położenie',153],['obu ramion robota',139])}
${note(664,350,['Wyzwolenie robota bądź',182],['wstrzymanie wyzwolenia',179])}
${note(367,582,['Kontrola',62],['prędkości',71],['obu ramion',85])}
${note(1231,251,['Włączanie i wyłączanie',167],['koordynacji pedkości ruchu',201])}
${note(1160,370,['Praca w trybie ręcznym lub',197],['wyzwolonym',95])}
${note(1145,623,['Włączenie i wyłączenie',167],['kinematyki odwrotnej',158])}
${note(897,694,['Włączenie i wyłączenie bazowania',249])}
<arrow-layer></arrow-layer>`);
def('layout-area', `:host{display:flex;flex-direction:column;width:1447px;height:606px;background:#dbe6f5;font:12px ${UI};color:#1f355e;border-bottom:1px solid #b9cbe0}
.tabs{height:25px;display:flex;background:#dfe8f5;border-bottom:1px solid #b7c9de;padding:2px 2px 0 6px}
.t{width:94px;height:23px;background:#f7faff;border:1px solid #b7c9de;border-bottom:0;border-radius:3px 3px 0 0;display:flex;align-items:center;padding:0 0 3px 5px}
.r{margin-left:auto;display:flex;align-items:center;gap:5px;padding-bottom:3px}
.f{margin:4px 6px 0;width:1436px;height:572px;border:1px solid #6e6e6e;border-width:1px 0 0 1px;border-right:1px solid #fff;border-bottom:1px solid #fff;background:#f0f0f0;box-shadow:0 -1px 0 #a0a0a0}
.s{height:17px;display:flex;align-items:center;padding:0 6px 2px;background:#ececec;border-top:1px solid #e2e2e2}
.th{width:1308px;height:14px;margin-left:7px;border:1px solid #979797;border-radius:1px;background:linear-gradient(#f6f6f6 0,#ebebeb 45%,#d0d0d2 55%,#c6c6ca);display:flex;align-items:center;justify-content:center;gap:1px}.th i{width:2px;height:6px;background:#666}`,
`<div class="tabs"><div class="t">${IC('layout')}${T('<u>1</u> Layout1',50,'margin-left:3px')}${IC('x','margin-left:9px')}</div><div class="r">${IC('caret')}${IC('x')}</div></div>
<div class="f"><layout-canvas></layout-canvas><div class="s"><svg width="5" height="8"><path d="M4.500 0v7L.5 3.500z" fill="#333"/></svg><div class="th"><i></i><i></i><i></i></div><svg width="5" height="8" style="margin-left:auto"><path d="M.5 0v7l4-3.500z" fill="#333"/></svg></div></div>`);

/* ---------- dock panels ---------- */
def('panel-header', `:host{display:flex;height:20px;align-items:center;background:#bfccda;border-top:1px solid #9a9a9a;padding:0 4px 2px 4px;font:12px ${UI};color:#444f5c;flex:none}.r{margin-left:auto;display:flex;align-items:center;gap:8px}`,
h => `${T(A(h,'t'),A(h,'w'))}<div class="r">${IC('caret','margin-right:1px')}${IC('pin')}${IC('x')}</div>`);
def('check-box', `:host{display:inline-block;flex:none;line-height:0}`, h => `<svg width="13" height="13"><defs>${G('c','#c9cdd3','#f8f8f8')}</defs><rect x=".5" y=".5" width="12" height="12" fill="#f7f7f7" stroke="#8e8f8f"/><rect x="3" y="3" width="7" height="7" fill="url(#c)"/>${h.hasAttribute('on')?'<path d="M3.500 6l2.200 3.500L9.500 3" stroke="#40599c" stroke-width="1.900" fill="none"/>':''}</svg>`);
const PG = [['c','Layout',36],['r','Layout name',60,T('Layout1',38,'margin-left:3px')],['r','Background color',84,'<i class="sw"></i>'+T('0xf0f0f0',38)+IC('caret','margin-left:auto;margin-right:6px;color:#000')],['r','Script',26,'<b class="dots">...</b>'],['r','Locked',35,'<check-box style="margin-left:2px"></check-box>'],['x','Source layout',64,''],['c','Content Size',71],['r','Content size',58,T('1530 x 550 (disabled)',101,'margin-left:3px')+IC('caret','margin-left:auto;margin-right:6px;color:#000')],['c','Grid',24],['r','Grid enabled',60,'<check-box on style="margin-left:2px"></check-box>'],['x','Grid size',40,''],['c','Instruments',68],['r','Selection handle enabled',120,'<check-box on style="margin-left:2px"></check-box>']];
def('property-grid', `:host{display:block;height:451px;background:#fff;border:1px solid #9a9a9a;font:11px ${AR};color:#000;box-sizing:border-box}
.c{height:17px;background:#efefef;display:flex;align-items:center;font:bold 12px ${UI};padding-left:6px}.c fit-text{margin-left:7px}.c:first-of-type{height:18px;padding-bottom:1px}
.r{height:17px;display:flex;padding-left:11px;background:#efefef}
.k{width:212px;display:flex;align-items:center;background:#fff;border-right:1px solid #e6e6e6;border-bottom:1px solid #ececec;padding:1px 0 0 16px}.k cd-icon{margin:-3px 4px 0 -10px}
.v{flex:1;display:flex;align-items:center;background:#fff;border-bottom:1px solid #ececec}.v fit-text{margin-top:1px}
.sw{width:20px;height:14px;border:1px solid #888;background:#f0f0f0;margin:0 4px 0 1px}.dots{margin-left:auto;width:15px;height:13px;margin-right:1px;border:1px solid #777;border-radius:3px;background:linear-gradient(#fff,#d9d9d9);line-height:8px;text-align:center}`,
PG.map(([k, t, w, v]) => k === 'c' ? `<div class="c">${IC('tri')}${T(t, w)}</div>` : `<div class="r"><div class="k">${k === 'x' ? IC('trio') : ''}${T(t, w)}</div><div class="v">${v}</div></div>`).join(''));
def('properties-panel', `:host{display:flex;flex-direction:column;width:447px;height:606px;background:#fbfbfb;font:12px ${UI}}
panel-header{border-left:1px solid #9a9a9a}
.tb{height:23px;background:#f0f0f0;display:flex;align-items:center;padding:0 0 1px 0;gap:4px}.p{width:22px;height:18px;border:1px solid #555;border-radius:3px;background:linear-gradient(#d8d8d8,#f0f0f0);display:flex;align-items:center;justify-content:center}
.d{height:85px;border:1px solid #9a9a9a;background:#f0f0f0;margin-top:4px;display:flex;justify-content:flex-end;padding:20px 5px 4px}
.sb{width:15px;border-left:1px solid #ddd;border-right:1px solid #fafafa;display:flex;flex-direction:column;justify-content:space-between;align-items:center;padding:7px 0 7px}
.bt{display:flex;height:21px;margin-top:2px;color:#666}.a{width:134px;display:flex;align-items:center;border-top:1px solid #9a9a9a;padding:0 0 1px 7px;height:19px}
.b{width:80px;height:19px;border:1px solid #9a9a9a;border-top:0;border-radius:0 0 4px 4px;background:#fff;color:#000;display:flex;align-items:center;padding-left:3px}.z{flex:1;border-top:1px solid #9a9a9a}`,
`<panel-header t="Properties" w="53"></panel-header><div class="tb"><div class="p">${IC('cat1')}</div>${IC('cat2')}${IC('cat3','margin-left:2px')}</div><property-grid></property-grid>
<div class="d"><div class="sb"><svg width="7" height="4"><path d="M0 4h7L3.500 0z" fill="#888"/></svg><svg width="7" height="4"><path d="M0 0h7L3.500 4z" fill="#888"/></svg></div></div>
<div class="bt"><div class="a">${IC('isel')}${T('Instrument Selector',103,'margin-left:3px')}</div><div class="b">${IC('propi')}${T('Properties',53,'margin-left:2px')}</div><div class="z"></div></div>`);

def('tool-button', `:host{display:flex;flex:none;width:22px;height:22px;border:1px solid #b5b9c0;border-radius:3px;background:linear-gradient(#fff,#f0f2f5);align-items:center;justify-content:center;box-sizing:border-box}:host([on]){border:2px solid #336a94;background:linear-gradient(#a8d3ea,#d2ecf8)}:host([flat]){border-color:#f3f3f3;background:#f6f6f6}`, h => IC(A(h,'n')));
def('combo-box', `:host{display:flex;flex:none;height:18px;background:#fff;align-items:center;padding:0 3px 0 3px;font:12px ${AR};justify-content:space-between;box-sizing:border-box}`, '<slot></slot>'+IC('caret'));
def('group-tree', `:host{display:block;width:302px;background:#fff;font:12px ${AR};height:206px}
.tb{height:26px;background:#f0f0f0;display:flex;align-items:center;padding-left:5px;gap:4px}
.h,.r{display:grid;grid-template-columns:183px 100px 17px;height:19px}.h{background:linear-gradient(#fff,#f6f8f9);border-bottom:1px solid #d4d4d4}.h div{display:flex;align-items:center;justify-content:center;border-right:1px solid #e0e0e0;padding-bottom:1px}
.r{border-bottom:1px solid #ddd;background:#f4f4f4;width:300px}.r div{display:flex;align-items:center;border-right:1px solid #e0e0e0}.r div:last-child{border:0}.s{background:#d6d6d6}`,
`<div class="tb"><tool-button on n="treeb"></tool-button><tool-button on n="star"></tool-button><combo-box style="width:120px;margin-left:-1px">${T('No Filter',46,'margin-left:-1px')}</combo-box><tool-button n="fpen" style="margin-left:-1px"></tool-button>${IC('over','margin-left:-4px;margin-top:2px')}</div>
<div class="h"><div>${T('Group',31)}</div><div>${T('Description',55)}</div><div></div></div>
<div class="r"><div>${IC('tri','margin:-5px 6px 0 5px')}${IC('vars')}${T('All Variable Descriptions',120,'margin:2px 0 0 6px')}</div><div></div><div></div></div>
<div class="r s"><div>${IC('trio','margin:-4px 10px 0 15px')}${IC('vfile')}${T('untitled.sdf',54,'margin:1px 0 0 6px')}</div><div></div><div></div></div>`);
const cols = '61px 20px 21px 199px 140px 123px 234px 60px 100px 1fr';
const rows = [['out','currentTime',59,'Current simulation time. Increments with exe...',223,'s','Double 64 bit',65],['out','errorNumber',63,'Error number of last error message (zero if n...',223,'-','Unsigned 32 bit',77],['out','finalTime',45,'Simulation stop time. When reached, simStat...',225,'s','Double 64 bit',65],['out','modelStepSize',74,'Fixed step size of the model, sample time of...',220,'s','Double 64 bit',65],['P','rtiAssertionMode',83,'Assertion Mode: OFF=0 WARN=1 STOP=2',211,'-','Signed 32 bit',64],['P','simState',43,'Simulation state: STOP=0 PAUSE=1 RUN=2',219,'-','Signed 32 bit',64]];
def('variable-table', `:host{display:block;width:1393px;background:#fff;font:12px ${AR};height:206px;border-left:2px solid #a5a5a5;box-sizing:border-box}
.tb{height:26px;background:#f0f0f0;display:flex;align-items:center;padding-left:4px}.q{width:132px;height:21px;border:1px solid #ccc;border-top-color:#777;background:#fff;color:#777;display:flex;align-items:center;padding:0 0 3px 7px;font:12px ${UI}}
.h,.r{display:grid;grid-template-columns:${cols};height:19px;padding-left:1px}.h{background:linear-gradient(#fff,#f6f8f9);border-bottom:1px solid #d4d4d4}
.h div{display:flex;align-items:center;justify-content:center;border-right:1px solid #e0e0e0;overflow:hidden;padding-bottom:1px}.r{border-bottom:1px solid #d8d8d8}.e{background:#f4f4f4}
.r div{display:flex;align-items:center;padding:3px 0 0 3px;border-right:1px solid #dcdcdc;overflow:hidden}.r div.n{padding:0 0 0 1px}.r div.ck{padding:0 10px 0 0;justify-content:center}.r div.vn{padding-left:2px}.r div:last-child,.h div:last-child{border:0}`,
`<div class="tb"><div class="q">${T('Search or filter variable ...',118)}</div>${T('by',12,'margin-left:4px')}<combo-box style="width:79px;margin:0 4px 0 4px">${T('Variable',45)}</combo-box><tool-button n="sd" style="margin-right:2px"></tool-button><tool-button n="su" style="margin-right:2px"></tool-button><tool-button n="fw" style="margin-right:1px"></tool-button><tool-button flat n="fx" style="margin-left:1px;width:21px"></tool-button>${IC('over','margin:2px 0 0 0')}</div>
<div class="h"><div>${T('Favorite',40,'margin-left:2px')}</div><div style="justify-content:flex-start;padding-left:1px"><fit-text w="18">Var</fit-text></div><div style="justify-content:flex-start;padding-left:1px"><fit-text w="20">Con</fit-text></div><div style="display:grid;grid-template-columns:1fr 9px 5px;align-items:center;justify-items:center"><span style="padding-left:14px">${T('Variable',41)}</span>${IC('up')}</div><div>${T('Block',27)}</div><div>${T('Platform/Device',78)}</div><div>${T('Description',55)}</div><div>${T('Unit',20)}</div><div>${T('Type',24)}</div><div></div></div>`
+ rows.map((r, i) => `<div class="r ${i % 2 ? 'e' : ''}"><div class="ck"><check-box></check-box></div><div class="n">${IC(r[0])}</div><div></div><div class="vn">${T(r[1], r[2])}</div><div></div><div>${T('Platform', 41)}</div><div>${T(r[3], r[4])}</div><div>${T(r[5], r[5] === '-' ? 4 : 6)}</div><div>${T(r[6], r[7])}</div><div></div></div>`).join(''));
def('favorite-list', `:host{display:block;flex:1;background:#fff;font:12px ${AR};height:206px;border-left:2px solid #a5a5a5}
.tb{height:26px;background:#f0f0f0;display:flex;align-items:center;padding-left:7px}.h{height:19px;background:linear-gradient(#fff,#f6f8f9);border-bottom:1px solid #d4d4d4;display:flex;align-items:center;padding:0 4px 1px 0;justify-content:flex-end}`,
`<div class="tb"><tool-button flat n="fold1" style="width:19px"></tool-button><tool-button flat n="fold2" style="width:19px;margin-left:7px"></tool-button>${IC('over','margin:2px 0 0 1px')}</div><div class="h">${T('Favorite',40)}${IC('up','margin-left:65px')}</div>`);
def('bottom-tabs', `:host{display:flex;height:22px;font:12px ${UI};color:#666;align-items:flex-start;background:#f5f5f5;border-top:1px solid #9a9a9a}
div{display:flex;align-items:center;height:18px}.a{width:76px;margin-left:2px;border:1px solid #9a9a9a;border-top:0;border-radius:0 0 4px 4px;background:#fff;color:#000;height:20px;padding-left:4px;margin-right:5px;margin-top:-1px}.s{width:1px;height:12px;background:#888;margin:3px 4px 0}`,
`<div class="a">${IC('vars')}${T('Variables',47,'margin-left:3px')}</div><div>${IC('pool')}${T('Measurement Data Pool',127,'margin-left:4px')}</div><i class="s"></i><div>${IC('plat')}${T('Platforms/Devices',96,'margin-left:3px')}</div><i class="s"></i><div>${IC('py')}${T('Interpreter',56,'margin-left:2px')}</div><i class="s"></i><div>${IC('msg')}${T('Messages',51,'margin-left:2px')}</div>`);
def('variables-panel', `:host{display:flex;flex-direction:column;margin-left:22px;width:1898px;height:274px}.m{display:flex;height:206px}.st{height:24px;background:#f0eceb;border-top:1px solid #c8c8c8;font:12px ${AR};display:flex;align-items:center;padding:3px 0 0 3px;flex:none}`,
`<panel-header t="Variables" w="47"></panel-header><div class="m"><group-tree></group-tree><variable-table></variable-table><favorite-list></favorite-list></div><div class="st">${T('No filter is active',88)}</div><div style="height:2px;background:#fafafa"></div><bottom-tabs></bottom-tabs>`);

/* ---------- status and task bars ---------- */
def('status-bar', `:host{display:flex;height:22px;background:linear-gradient(#d9e4f3,#c5d3e6 45%,#b3c4da);border-top:1px solid #7f9cc0;font:12px ${UI};color:#1c2d6b;align-items:center;box-sizing:border-box}
i{width:1px;height:17px;background:#90a4be;box-shadow:1px 0 0 #fff;flex:none}`,
`<i style="margin-left:1440px"></i>${T('Offline',36,'margin-left:4px')}<i style="margin-left:222px"></i><i style="margin-left:53px"></i><i style="margin-left:53px"></i><div style="width:50px;height:17px;background:#fff;margin-left:3px"></div><i></i><div style="width:48px;height:16px;background:#f0f0f0;margin-left:3px"></div>`);
def('task-button', `:host{display:flex;flex:none;height:39px;align-items:center;justify-content:center;box-sizing:border-box}:host([on]){border:1px solid #16395e;border-radius:3px;box-shadow:inset 0 0 0 1px #cfe6f599;background:linear-gradient(135deg,#b5dbf099,#6cb2da66)}:host([act]){background:linear-gradient(160deg,#e6f3fb,#a5d2ec)}`, h => IC(A(h,'n')));
def('task-bar', `:host{display:flex;height:40px;flex:none;align-items:center;box-sizing:border-box;border-top:1px solid #15304e;box-shadow:inset 0 1px 0 #7fb2d488;font:12px ${UI};color:#fff;
background:radial-gradient(ellipse 80px 25px at 1380px 44px,#3a8bc999,transparent),linear-gradient(115deg,#1a5086 0,#1c5b93 60px,#4d8cba 100px,#2377b3 118px,#2a83bf 180px,#3897d0 420px,#379bd3 700px,#3696d0 900px,#2a80c2 1120px,#1f66ad 1320px,#1e5ea5 1500px,#1d5494 1620px,#1e4674 1660px,#1b406e 1780px,#123156 1920px)}
.k{width:4px;height:39px;border:1px solid #1b4b76;border-left:0;border-radius:0 3px 3px 0;background:#79bbe088;box-shadow:inset -1px 0 0 #bfe0f399}.ck{display:flex;flex-direction:column;align-items:center;line-height:17px;width:60px}.sd{width:15px;height:39px;border:1px solid #0c2746;box-shadow:inset 0 0 0 1px #88a8c866;background:linear-gradient(#6c8aac,#1c3f68 60%)}`,
`<task-button n="orb" style="margin-left:8px;width:38px"></task-button><task-button n="ie" style="margin-left:27px;width:32px"></task-button><task-button on n="expl" style="margin-left:17px;width:51px"></task-button><i class="k"></i><i class="k"></i><task-button n="wmp" style="margin-left:16px;width:32px"></task-button><task-button on n="chrome" style="margin-left:17px;width:59px"></task-button><task-button on n="matlab" style="margin-left:2px;width:52px"></task-button><i class="k"></i><i class="k"></i><task-button on act n="cdesk" style="margin-left:2px;width:59px"></task-button>
<div style="margin-left:auto;display:flex;align-items:center">${T('PL',13,'margin-top:-6px')}${IC('kbd','margin-left:8px;margin-top:-6px')}${IC('tup','margin-left:12px')}${IC('flagw','margin-left:14px')}${IC('net','margin-left:8px')}${IC('spk','margin-left:8px')}<div class="ck" style="margin:0 10px 0 16px">${T('09:07',27)}${T('2022-11-07',58)}</div><div class="sd"></div></div>`);

def('cd-app', ':host{display:flex;flex-direction:column;width:1920px;height:1080px;background:#f0f0f0;overflow:hidden}.mid{display:flex;height:611px}properties-panel{margin-left:4px}',
`<title-bar></title-bar><ribbon-tabs></ribbon-tabs><ribbon-bar></ribbon-bar><div class="mid"><side-dock></side-dock><layout-area></layout-area><properties-panel></properties-panel></div><variables-panel></variables-panel><status-bar></status-bar><task-bar></task-bar>`);
</script>
</body>
</html>
